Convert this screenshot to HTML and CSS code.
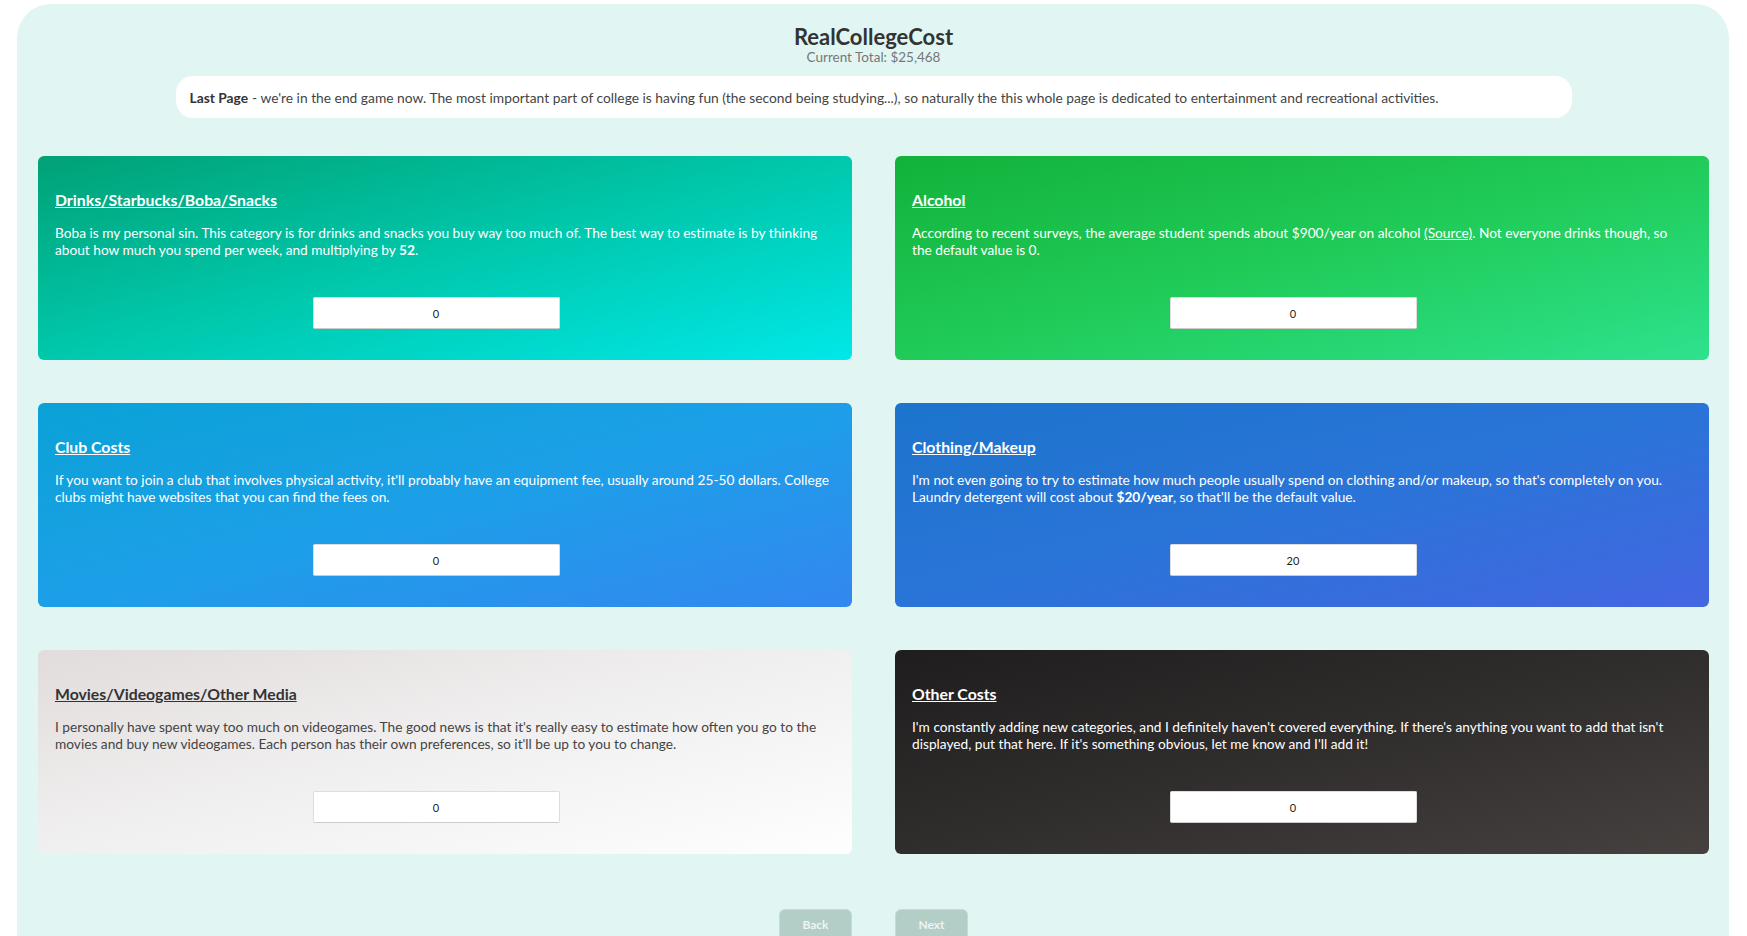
FILE: index.html
```html
<!DOCTYPE html>
<html lang="en">
<head>
<meta charset="utf-8">
<title>RealCollegeCost</title>
<link rel="stylesheet" href="styles.css">
</head>
<body>
<div class="page">
  <header class="header">
    <h1 class="title">RealCollegeCost</h1>
    <div class="total">Current Total: $25,468</div>
  </header>
  <div class="intro"><b>Last Page</b> - we're in the end game now. The most important part of college is having fun (the second being studying...), so naturally the this whole page is dedicated to entertainment and recreational activities.</div>

  <div class="grid">
    <section class="card c-drinks">
      <h3 class="card-title">Drinks/Starbucks/Boba/Snacks</h3>
      <p class="card-text">Boba is my personal sin. This category is for drinks and snacks you buy way too much of. The best way to estimate is by thinking about how much you spend per week, and multiplying by <b>52</b>.</p>
      <input class="amount" type="text" value="0">
    </section>
    <section class="card c-alcohol">
      <h3 class="card-title">Alcohol</h3>
      <p class="card-text">According to recent surveys, the average student spends about $900/year on alcohol <a href="#">(Source)</a>. Not everyone drinks though, so the default value is 0.</p>
      <input class="amount" type="text" value="0">
    </section>
    <section class="card c-club">
      <h3 class="card-title">Club Costs</h3>
      <p class="card-text">If you want to join a club that involves physical activity, it'll probably have an equipment fee, usually around 25-50 dollars. College clubs might have websites that you can find the fees on.</p>
      <input class="amount" type="text" value="0">
    </section>
    <section class="card c-clothing">
      <h3 class="card-title">Clothing/Makeup</h3>
      <p class="card-text">I'm not even going to try to estimate how much people usually spend on clothing and/or makeup, so that's completely on you. Laundry detergent will cost about <b>$20/year</b>, so that'll be the default value.</p>
      <input class="amount" type="text" value="20">
    </section>
    <section class="card c-media">
      <h3 class="card-title">Movies/Videogames/Other Media</h3>
      <p class="card-text">I personally have spent way too much on videogames. The good news is that it's really easy to estimate how often you go to the movies and buy new videogames. Each person has their own preferences, so it'll be up to you to change.</p>
      <input class="amount" type="text" value="0">
    </section>
    <section class="card c-other">
      <h3 class="card-title">Other Costs</h3>
      <p class="card-text">I'm constantly adding new categories, and I definitely haven't covered everything. If there's anything you want to add that isn't displayed, put that here. If it's something obvious, let me know and I'll add it!</p>
      <input class="amount" type="text" value="0">
    </section>
  </div>

  <div class="nav">
    <button class="btn btn-back" type="button">Back</button>
    <button class="btn btn-next" type="button">Next</button>
  </div>
</div>
</body>
</html>
```

FILE: styles.css
```css
* { box-sizing: border-box; }

html, body {
  margin: 0;
  padding: 0;
  background: #ffffff;
}

body {
  font-family: Lato, "Noto Sans", sans-serif;
  color: #333;
}

.page {
  margin: 4px 18px 0 17px;
  background: #e1f6f3;
  border-radius: 34px;
  padding: 21px 20px 40px 21px;
}

.header {
  text-align: center;
}

.title {
  margin: 0;
  font-size: 22px;
  line-height: 24px;
  font-weight: 700;
  color: #333;
}

.total {
  font-size: 13.5px;
  line-height: 16px;
  color: #777;
}

.intro {
  width: 1396px;
  margin: 11px auto 0;
  background: #fff;
  border-radius: 17px;
  height: 42px;
  padding: 0 14px;
  display: flex;
  align-items: center;
  font-size: 13.8px;
  color: #444;
  white-space: nowrap;
}

.intro b {
  color: #333;
  margin-right: 4px;
}

.grid {
  display: grid;
  grid-template-columns: 1fr 1fr;
  column-gap: 43px;
  row-gap: 43px;
  margin-top: 38px;
}

.card {
  height: 204px;
  border-radius: 6px;
  padding: 34px 19px 0 17px;
  display: flex;
  flex-direction: column;
  color: #fff;
}

.card-title {
  margin: 0;
  font-size: 15.8px;
  line-height: 20px;
  font-weight: 700;
  text-decoration: underline;
}

.card-text {
  margin: 15px 0 0;
  font-size: 13.7px;
  line-height: 16.6px;
}

.card-text a {
  color: inherit;
  text-decoration: underline;
}

.amount {
  align-self: center;
  margin-top: auto;
  margin-bottom: 31px;
  margin-right: 16px;
  width: 247px;
  height: 32px;
  border: 1px solid #ddd;
  border-bottom-color: #ccc;
  border-radius: 2px;
  background: #fff;
  text-align: center;
  font-family: Lato, "Noto Sans", sans-serif;
  font-size: 11px;
  color: #222;
  outline: none;
}

.c-drinks   { background: linear-gradient(to bottom right, #01a175, #00c8ac 50%, #00e8e8); }
.c-alcohol  { background: linear-gradient(to bottom right, #12b23a, #20cb58 50%, #2ee28e); }
.c-club     { background: linear-gradient(to bottom right, #0aa2d6, #1d9fe8 50%, #3387f0); }
.c-clothing { background: linear-gradient(to bottom right, #1c74cc, #2a74d8 50%, #4466e2); }
.c-media    { background: linear-gradient(to bottom right, #e2dcdc, #f1f0f0 50%, #fefefe); color: #444; }
.c-media .card-title { color: #333; }
.c-other    { background: linear-gradient(to bottom right, #201d1e, #302d2d 50%, #46413f); }

.nav {
  display: grid;
  grid-template-columns: 1fr 1fr;
  column-gap: 43px;
  margin-top: 55px;
}

.btn {
  width: 73px;
  height: 31px;
  background: #b3cec7;
  border: 1px solid #c9d9d5;
  border-radius: 6px;
  color: #eef4f2;
  font-family: Lato, "Noto Sans", sans-serif;
  font-weight: 700;
  font-size: 12px;
  padding: 0;
}

.btn-back { justify-self: end; }
.btn-next { justify-self: start; }
```
